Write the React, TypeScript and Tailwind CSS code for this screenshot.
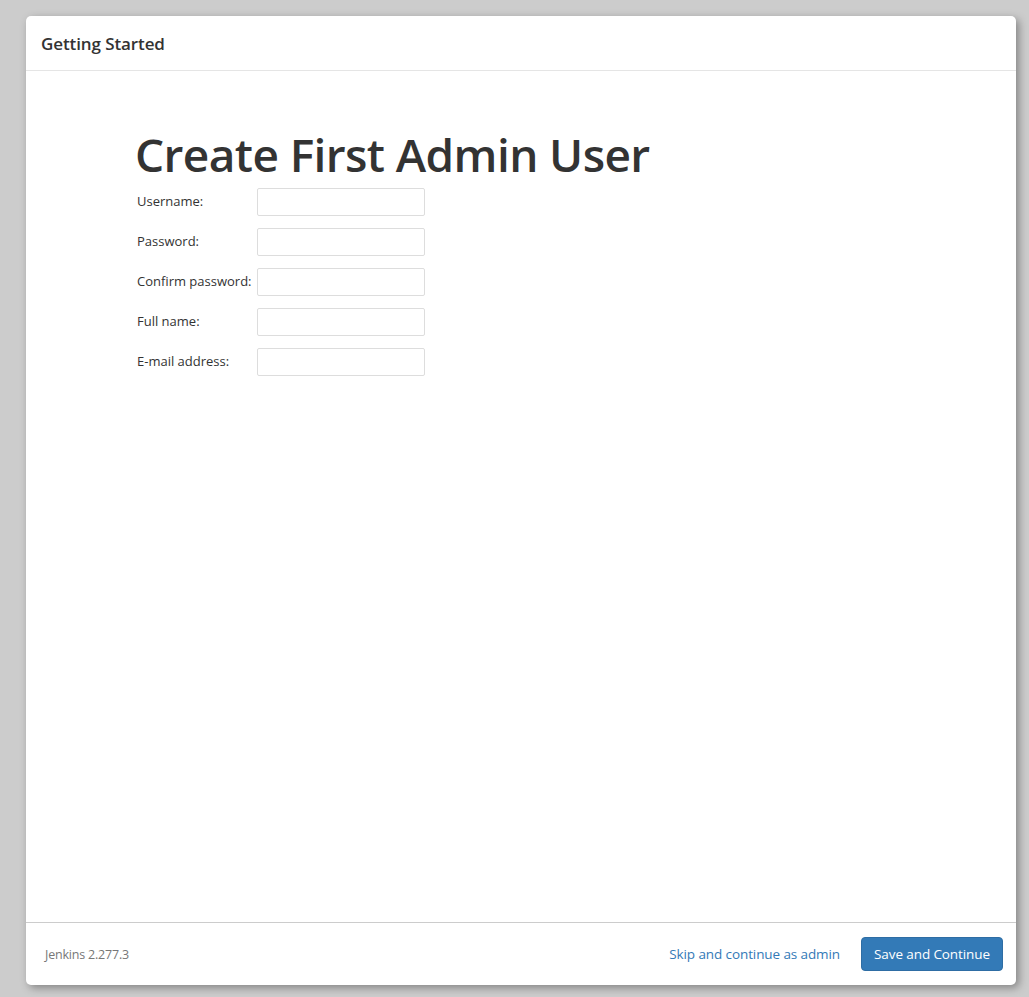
import React from "react";

const fields = ["Username:", "Password:", "Confirm password:", "Full name:", "E-mail address:"];

export default function App() {
  return (
    <div
      className="w-full h-[997px] bg-[#cccccc] pt-[16px] pl-[26px]"
      style={{ fontFamily: '"Open Sans", "Noto Sans", sans-serif' }}
    >
      <div className="w-[990px] h-[969px] bg-white rounded-[5px] shadow-[3px_3px_8px_rgba(0,0,0,0.35)] flex flex-col text-[#333333]">
        <div className="h-[55px] border-b border-[#e5e5e5] pl-[15px] flex items-center">
          <h4 className="text-[17px] leading-none font-semibold tracking-[-0.1px] mt-[1px]">Getting Started</h4>
        </div>
        <div className="flex-1 pl-[109px] pt-[53px]">
          <h1 className="text-[46px] leading-[60px] font-semibold tracking-[-0.6px] h-[64px]">Create First Admin User</h1>
          <div className="flex flex-col gap-[12px] pl-[2px]">
            {fields.map((f) => (
              <div key={f} className="flex items-center h-[28px]">
                <label className="w-[120px] text-[13px] leading-none mb-[2px]">{f}</label>
                <input
                  type="text"
                  className="w-[168px] h-[28px] border border-[#dddddd] rounded-[2px] outline-none"
                />
              </div>
            ))}
          </div>
        </div>
        <div className="h-[63px] border-t border-[#cccccc] flex items-center pl-[19px] pr-[13px]">
          <span className="text-[12.5px] text-[#777777] tracking-[-0.2px] mt-[3px]">Jenkins 2.277.3</span>
          <div className="flex-1" />
          <a className="text-[13.5px] text-[#337ab7] tracking-[-0.1px] mr-[21px]">Skip and continue as admin</a>
          <button className="w-[142px] h-[34px] bg-[#337ab7] border border-[#2e6da4] rounded-[4px] text-white text-[13.5px] tracking-[-0.1px]">
            Save and Continue
          </button>
        </div>
      </div>
    </div>
  );
}
